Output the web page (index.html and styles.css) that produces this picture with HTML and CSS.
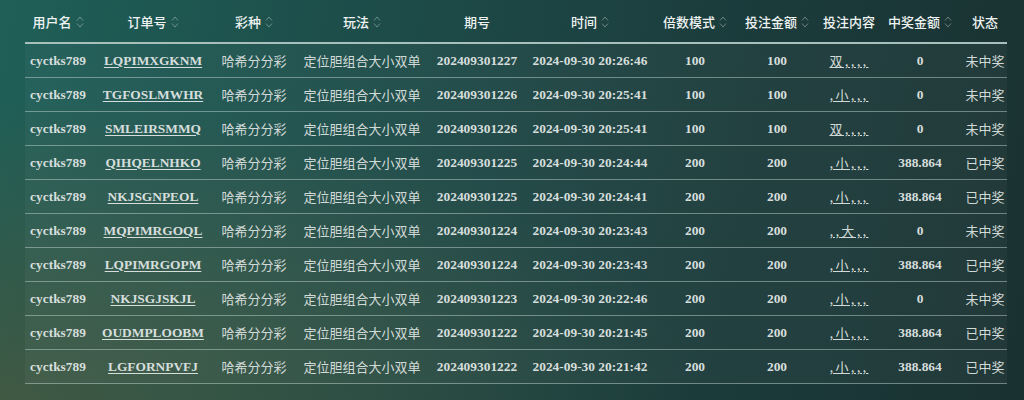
FILE: index.html
```html
<!DOCTYPE html>
<html lang="zh-CN">
<head>
<meta charset="utf-8">
<title>投注记录</title>
<link rel="stylesheet" href="styles.css">
</head>
<body>
<div class="page">
<table class="bets">
<colgroup>
<col class="c1"><col class="c2"><col class="c3"><col class="c4"><col class="c5"><col class="c6"><col class="c7"><col class="c8"><col class="c9"><col class="c10"><col class="c11">
</colgroup>
<thead>
<tr>
<th><span class="h">用户名<svg class="sort" viewBox="0 0 8 14"><path d="M1 5.5 L4 2 L7 5.5 M1 8.5 L4 12 L7 8.5"/></svg></span></th>
<th><span class="h">订单号<svg class="sort" viewBox="0 0 8 14"><path d="M1 5.5 L4 2 L7 5.5 M1 8.5 L4 12 L7 8.5"/></svg></span></th>
<th><span class="h">彩种<svg class="sort" viewBox="0 0 8 14"><path d="M1 5.5 L4 2 L7 5.5 M1 8.5 L4 12 L7 8.5"/></svg></span></th>
<th><span class="h">玩法<svg class="sort" viewBox="0 0 8 14"><path d="M1 5.5 L4 2 L7 5.5 M1 8.5 L4 12 L7 8.5"/></svg></span></th>
<th><span class="h">期号</span></th>
<th><span class="h">时间<svg class="sort" viewBox="0 0 8 14"><path d="M1 5.5 L4 2 L7 5.5 M1 8.5 L4 12 L7 8.5"/></svg></span></th>
<th><span class="h">倍数模式<svg class="sort" viewBox="0 0 8 14"><path d="M1 5.5 L4 2 L7 5.5 M1 8.5 L4 12 L7 8.5"/></svg></span></th>
<th><span class="h">投注金额<svg class="sort" viewBox="0 0 8 14"><path d="M1 5.5 L4 2 L7 5.5 M1 8.5 L4 12 L7 8.5"/></svg></span></th>
<th><span class="h">投注内容</span></th>
<th><span class="h">中奖金额<svg class="sort" viewBox="0 0 8 14"><path d="M1 5.5 L4 2 L7 5.5 M1 8.5 L4 12 L7 8.5"/></svg></span></th>
<th><span class="h">状态</span></th>
</tr>
</thead>
<tbody>
<tr><td>cyctks789</td><td><a class="ord">LQPIMXGKNM</a></td><td class="zh">哈希分分彩</td><td class="zh">定位胆组合大小双单</td><td>202409301227</td><td>2024-09-30 20:26:46</td><td>100</td><td>100</td><td><span class="content">双,,,,</span></td><td>0</td><td class="zh">未中奖</td></tr>
<tr><td>cyctks789</td><td><a class="ord">TGFOSLMWHR</a></td><td class="zh">哈希分分彩</td><td class="zh">定位胆组合大小双单</td><td>202409301226</td><td>2024-09-30 20:25:41</td><td>100</td><td>100</td><td><span class="content">,小,,,</span></td><td>0</td><td class="zh">未中奖</td></tr>
<tr><td>cyctks789</td><td><a class="ord">SMLEIRSMMQ</a></td><td class="zh">哈希分分彩</td><td class="zh">定位胆组合大小双单</td><td>202409301226</td><td>2024-09-30 20:25:41</td><td>100</td><td>100</td><td><span class="content">双,,,,</span></td><td>0</td><td class="zh">未中奖</td></tr>
<tr><td>cyctks789</td><td><a class="ord">QIHQELNHKO</a></td><td class="zh">哈希分分彩</td><td class="zh">定位胆组合大小双单</td><td>202409301225</td><td>2024-09-30 20:24:44</td><td>200</td><td>200</td><td><span class="content">,小,,,</span></td><td>388.864</td><td class="zh">已中奖</td></tr>
<tr><td>cyctks789</td><td><a class="ord">NKJSGNPEOL</a></td><td class="zh">哈希分分彩</td><td class="zh">定位胆组合大小双单</td><td>202409301225</td><td>2024-09-30 20:24:41</td><td>200</td><td>200</td><td><span class="content">,小,,,</span></td><td>388.864</td><td class="zh">已中奖</td></tr>
<tr><td>cyctks789</td><td><a class="ord">MQPIMRGOQL</a></td><td class="zh">哈希分分彩</td><td class="zh">定位胆组合大小双单</td><td>202409301224</td><td>2024-09-30 20:23:43</td><td>200</td><td>200</td><td><span class="content">,,大,,</span></td><td>0</td><td class="zh">未中奖</td></tr>
<tr><td>cyctks789</td><td><a class="ord">LQPIMRGOPM</a></td><td class="zh">哈希分分彩</td><td class="zh">定位胆组合大小双单</td><td>202409301224</td><td>2024-09-30 20:23:43</td><td>200</td><td>200</td><td><span class="content">,小,,,</span></td><td>388.864</td><td class="zh">已中奖</td></tr>
<tr><td>cyctks789</td><td><a class="ord">NKJSGJSKJL</a></td><td class="zh">哈希分分彩</td><td class="zh">定位胆组合大小双单</td><td>202409301223</td><td>2024-09-30 20:22:46</td><td>200</td><td>200</td><td><span class="content">,小,,,</span></td><td>0</td><td class="zh">未中奖</td></tr>
<tr><td>cyctks789</td><td><a class="ord">OUDMPLOOBM</a></td><td class="zh">哈希分分彩</td><td class="zh">定位胆组合大小双单</td><td>202409301222</td><td>2024-09-30 20:21:45</td><td>200</td><td>200</td><td><span class="content">,小,,,</span></td><td>388.864</td><td class="zh">已中奖</td></tr>
<tr><td>cyctks789</td><td><a class="ord">LGFORNPVFJ</a></td><td class="zh">哈希分分彩</td><td class="zh">定位胆组合大小双单</td><td>202409301222</td><td>2024-09-30 20:21:42</td><td>200</td><td>200</td><td><span class="content">,小,,,</span></td><td>388.864</td><td class="zh">已中奖</td></tr>
</tbody>
</table>
</div>
</body>
</html>
```
FILE: styles.css
```css
html, body {
  margin: 0;
  padding: 0;
  width: 1024px;
  height: 400px;
  overflow: hidden;
}
body {
  background:
    radial-gradient(ellipse 700px 300px at 0% 100%, rgba(78, 88, 60, 0.7), rgba(78, 88, 60, 0) 100%),
    linear-gradient(100deg, #1f5f57 0%, #1d4c49 35%, #1b3b3b 70%, #1a3131 100%);
}
.page {
  padding: 0 0 0 25px;
}
.bets {
  width: 982px;
  table-layout: fixed;
  border-collapse: collapse;
  font-family: "Liberation Serif", "Noto Sans CJK SC", serif;
  font-weight: bold;
  font-size: 13.4px;
  color: #d6dedc;
}
.c1 { width: 66px; }
.c2 { width: 124px; }
.c3 { width: 78px; }
.c4 { width: 138px; }
.c5 { width: 92px; }
.c6 { width: 134px; }
.c7 { width: 76px; }
.c8 { width: 88px; }
.c9 { width: 56px; }
.c10 { width: 86px; }
.c11 { width: 44px; }

.bets th {
  height: 42px;
  padding: 0;
  font-family: "Noto Sans CJK SC", sans-serif;
  font-weight: 500;
  font-size: 13px;
  color: #eef3f2;
  text-align: center;
  white-space: nowrap;
  border-bottom: 2px solid #a8c0bc;
}
.h {
  display: inline-flex;
  align-items: center;
  gap: 4px;
  padding-top: 1px;
}
.sort {
  width: 8px;
  height: 14px;
  fill: none;
  stroke: rgba(255, 255, 255, 0.35);
  stroke-width: 1;
}
.bets td {
  height: 33px;
  padding: 0;
  text-align: center;
  white-space: nowrap;
  border-bottom: 1px solid rgba(190, 210, 206, 0.5);
  background: rgba(255, 255, 255, 0.035);
}
.bets td.zh {
  font-family: "Noto Sans CJK SC", sans-serif;
  font-weight: 400;
  font-size: 13px;
  color: #d2dad8;
}
.ord {
  color: #d6dedc;
  text-decoration: underline;
  text-underline-offset: 2px;
}
.content {
  font-family: "Noto Sans CJK SC", sans-serif;
  font-weight: 400;
  font-size: 13px;
  color: #d2dad8;
  text-decoration: underline;
  letter-spacing: 2.3px;
}
```
